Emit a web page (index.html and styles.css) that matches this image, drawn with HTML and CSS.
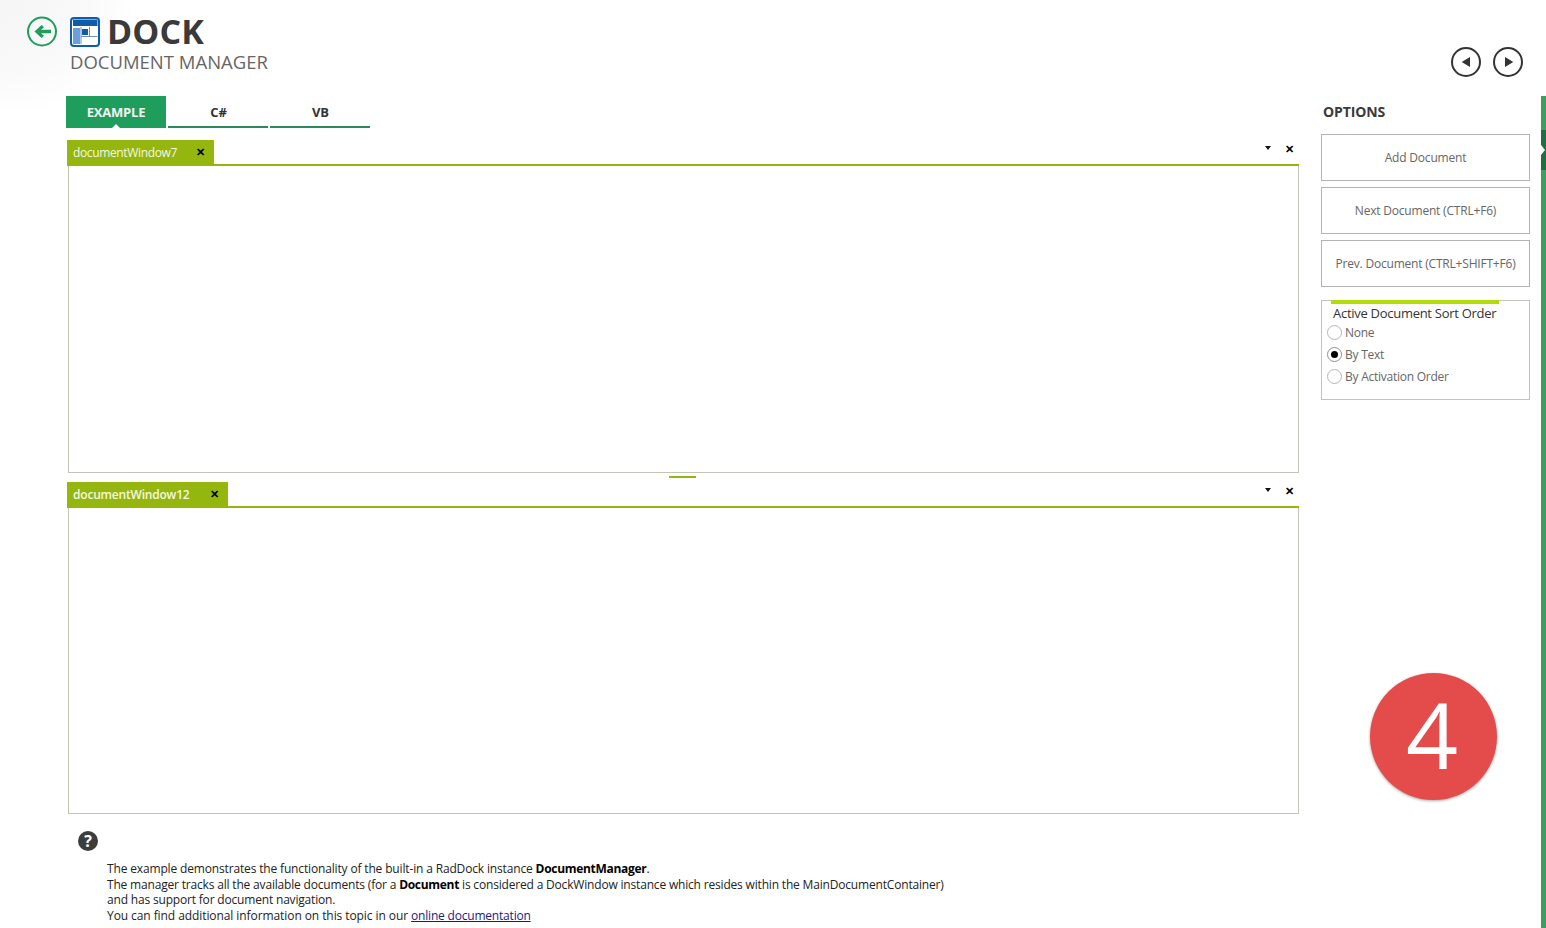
FILE: index.html
```html
<!DOCTYPE html>
<html lang="en">
<head>
<meta charset="utf-8">
<title>Dock - Document Manager</title>
<link rel="stylesheet" href="styles.css">
</head>
<body>
<div class="app">
  <div class="corner"></div>
  <header class="header">
    <svg class="back" width="32" height="32" viewBox="0 0 32 32">
      <circle cx="15" cy="15.5" r="14" fill="none" stroke="#1f9d5c" stroke-width="2"/>
      <path d="M7.5 15.5 L14.6 9 L17 11.2 L14 13.7 H24 V17.3 H14 L17 19.8 L14.6 22 Z" fill="#1f9d5c"/>
    </svg>
    <div class="heading">
      <div class="title-row">
        <svg class="dock-icon" width="30" height="30" viewBox="0 0 30 30">
          <rect x="1" y="1" width="28" height="28" rx="3" fill="#fff" stroke="#0f5ca8" stroke-width="2"/>
          <rect x="3" y="2.5" width="24.5" height="6.5" fill="#0f5ca8"/>
          <rect x="3" y="11" width="7" height="16" fill="#6a9fdc"/>
          <rect x="12" y="12" width="6" height="6" fill="#0f5ca8"/>
          <path d="M11 10 V27 M11 19.5 H27.5 M19.5 10 V19.5" stroke="#6a8fb8" stroke-width="1" fill="none"/>
        </svg>
        <h1 class="title">DOCK</h1>
      </div>
      <div class="subtitle">DOCUMENT MANAGER</div>
    </div>
    <div class="nav">
      <svg width="32" height="32" viewBox="0 0 32 32">
        <circle cx="16" cy="16" r="14" fill="none" stroke="#333" stroke-width="2"/>
        <path d="M11.7 16 L20 11 V21 Z" fill="#333"/>
      </svg>
      <svg width="32" height="32" viewBox="0 0 32 32">
        <circle cx="16" cy="16" r="14" fill="none" stroke="#333" stroke-width="2"/>
        <path d="M21.3 16 L13 11 V21 Z" fill="#333"/>
      </svg>
    </div>
  </header>
  <main class="body">
    <section class="left">
      <nav class="tabs">
        <div class="tab active">EXAMPLE</div>
        <div class="tab">C#</div>
        <div class="tab">VB</div>
      </nav>
      <div class="dock first">
        <div class="dock-strip">
          <div class="doc-tab w7"><span class="doc-name">documentWindow7</span><span class="doc-x">✕</span></div>
          <div class="dock-tools"><span class="caret"></span><span class="tool-x">✕</span></div>
        </div>
        <div class="dock-body"></div>
      </div>
      <div class="splitter"><span class="grip"></span></div>
      <div class="dock second">
        <div class="dock-strip">
          <div class="doc-tab w12"><span class="doc-name">documentWindow12</span><span class="doc-x">✕</span></div>
          <div class="dock-tools"><span class="caret"></span><span class="tool-x">✕</span></div>
        </div>
        <div class="dock-body"></div>
      </div>
      <div class="help-icon">?</div>
      <div class="help-text">
        <p class="line-one">The example demonstrates the functionality of the built-in a RadDock instance <b>DocumentManager</b>.</p>
        <p>The manager tracks all the available documents (for a <b>Document</b> is considered a DockWindow instance which resides within the MainDocumentContainer)</p>
        <p>and has support for document navigation.</p>
        <p class="loose">You can find additional information on this topic in our <a href="#">online documentation</a></p>
      </div>
    </section>
    <aside class="options">
      <h2 class="options-title">OPTIONS</h2>
      <button class="opt-btn">Add Document</button>
      <button class="opt-btn">Next Document (CTRL+F6)</button>
      <button class="opt-btn">Prev. Document (CTRL+SHIFT+F6)</button>
      <div class="group">
        <div class="group-bar"></div>
        <div class="group-title">Active Document Sort Order</div>
        <div class="radio"><span class="dot"></span>None</div>
        <div class="radio"><span class="dot on"></span>By Text</div>
        <div class="radio"><span class="dot"></span>By Activation Order</div>
      </div>
    </aside>
    <div class="stripe"><div class="stripe-dark"></div></div>
  </main>
  <div class="badge">4</div>
</div>
</body>
</html>
```
FILE: styles.css
```css
* { box-sizing: border-box; }
html, body { margin: 0; padding: 0; background: #fff; }
body { font-family: "Open Sans", "Noto Sans", sans-serif; color: #333; }
.app { position: relative; width: 1546px; height: 928px; overflow: hidden; display: flex; flex-direction: column; background: #fff; }
.corner { position: absolute; left: 0; top: 0; width: 130px; height: 110px; background: radial-gradient(ellipse at 0 0, #f5f5f5 0%, #fafafa 50%, #fff 75%); pointer-events: none; }
.header { position: relative; height: 96px; flex: none; display: flex; align-items: flex-start; padding: 16px 0 0 27px; }
.back { flex: none; margin-right: 11px; }
.heading { display: flex; flex-direction: column; }
.title-row { display: flex; align-items: center; gap: 7px; height: 31px; }
.dock-icon { align-self: flex-end; }
.title { margin: 0; font-size: 34px; line-height: 31px; font-weight: 700; color: #3a3a3a; letter-spacing: 0.1px; }
.subtitle { font-size: 18.5px; line-height: 24px; margin-top: 3px; color: #666; letter-spacing: 0; }
.nav { margin-left: auto; margin-right: 22px; margin-top: 30px; display: flex; gap: 10px; }
.body { flex: 1; display: flex; min-height: 0; }
.left { width: 1299px; padding-left: 66px; flex: none; }
.tabs { display: flex; gap: 2px; height: 32px; }
.tab { position: relative; width: 100px; height: 32px; padding-left: 1px; border-bottom: 2px solid #2a8a5a; font-size: 13px; font-weight: 700; line-height: 32px; text-align: center; color: #333; letter-spacing: -0.2px; }
.tab.active { padding-left: 0; background: #1f9d5c; border-bottom: 0; color: #f2f2f2; }
.tab.active::after { content: ""; position: absolute; left: 46px; bottom: 0; border: 4px solid transparent; border-top: 0; border-bottom-color: #fff; }
.dock { margin-left: 1px; }
.first { margin-top: 12px; }
.dock-strip { display: flex; justify-content: space-between; height: 26px; border-bottom: 2px solid #94b60e; }
.doc-tab { display: flex; justify-content: space-between; align-items: center; height: 24px; background: #94b60e; color: #f4f7e2; font-size: 12px; padding: 0 9px 0 6px; }
.w7 { width: 147px; letter-spacing: -0.36px; }
.w12 { width: 161px; font-weight: 600; letter-spacing: -0.2px; }
.doc-x { color: #000; font-size: 11px; font-weight: 700; line-height: 1; letter-spacing: 0; margin-bottom: 2px; }
.dock-tools { display: flex; align-items: center; height: 16px; margin-right: 5px; gap: 14px; }
.caret { width: 0; height: 0; margin-left: 1px; border: 3px solid transparent; border-top: 4px solid #111; border-bottom: 0; }
.tool-x { font-size: 11px; font-weight: 700; color: #000; line-height: 1; }
.dock-body { margin-left: 1px; border: 1px solid #c2c4b6; border-top: 0; }
.first .dock-body { height: 307px; }
.second .dock-body { height: 306px; }
.splitter { height: 9px; position: relative; }
.grip { position: absolute; left: 603px; top: 3px; width: 27px; height: 2px; background: #94b60e; }
.help-icon { width: 20px; height: 20px; margin: 17px 0 0 12px; border-radius: 50%; background: #3d3d3d; color: #fff; font-size: 16px; font-weight: 700; line-height: 20px; text-align: center; }
.help-text { margin: 10px 0 0 41px; font-size: 12px; line-height: 15.6px; color: #222; white-space: nowrap; letter-spacing: -0.18px; }
.help-text p { margin: 0; }
.help-text .line-one { letter-spacing: -0.155px; }
.help-text .loose { letter-spacing: -0.08px; }
.help-text b { color: #000; letter-spacing: -0.3px; }
.help-text a { color: #1a1a80; letter-spacing: -0.2px; }
.options { width: 209px; margin-left: 22px; flex: none; }
.options-title { margin: 0; height: 38px; padding-left: 2px; font-size: 14px; line-height: 32px; font-weight: 700; color: #3a3a3a; letter-spacing: -0.1px; }
.opt-btn { display: block; width: 209px; height: 47px; margin: 0 0 6px; padding: 0; background: #fff; border: 1px solid #b3b3b3; font: 12px "Open Sans", "Noto Sans", sans-serif; color: #666; letter-spacing: -0.2px; }
.group { position: relative; margin-top: 13px; height: 100px; border: 1px solid #c4c4bc; padding: 4px 0 0 5px; }
.group-bar { position: absolute; left: 9px; top: -1px; width: 168px; height: 4px; background: #b1dc0a; }
.group-title { padding-left: 6px; font-size: 13px; line-height: 16px; color: #333; letter-spacing: -0.28px; }
.radio { display: flex; align-items: center; height: 22px; font-size: 12px; color: #666; letter-spacing: -0.25px; }
.dot { position: relative; width: 15px; height: 15px; margin-right: 3px; border: 1px solid #b5b5b5; border-radius: 50%; background: #fff; }
.dot.on { border-color: #8f8f8f; }
.dot.on::after { content: ""; position: absolute; left: 3px; top: 3px; width: 7px; height: 7px; border-radius: 50%; background: #000; }
.stripe { margin-left: auto; width: 5px; height: 100%; background: #3c9f5e; position: relative; }
.stripe-dark { position: absolute; top: 34px; left: 0; width: 5px; height: 40px; background: #1f6f42; }
.stripe-dark::after { content: ""; position: absolute; left: 0; top: 15px; border: 5px solid transparent; border-left: 4px solid #fff; border-right: 0; }
.badge { position: absolute; left: 1370px; top: 673px; width: 127px; height: 127px; border-radius: 50%; background: #e44c4c; box-shadow: 0 1px 3px rgba(0,0,0,.35); color: #fff; font-size: 91px; font-weight: 400; line-height: 123px; text-align: center; padding-right: 3px; font-family: "Open Sans", sans-serif; }
```
